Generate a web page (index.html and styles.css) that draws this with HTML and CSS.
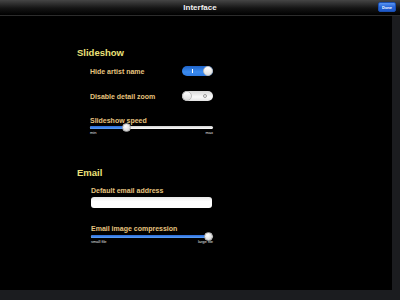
FILE: index.html
```html
<!DOCTYPE html>
<html>
    <head>
        <title>Interface</title>
        <meta charset="UTF-8">
        <link rel="stylesheet" href="styles.css">
    </head>
    <body>
        <div class="tela">
            <header class="barra">
                <span></span>
                <h1>Interface</h1>
                <button class="pronto">Done</button>
            </header>
            <main class="conteudo">
                <!-- Slideshow -->
                <section class="secao">
                    <h2>Slideshow</h2>
                    <div class="itens">
                        <div class="linha">
                            <span class="rotulo">Hide artist name</span>
                            <span class="chave ligada"><span class="marca-i"></span><span class="botao"></span></span>
                        </div>
                        <div class="linha segunda">
                            <span class="rotulo">Disable detail zoom</span>
                            <span class="chave"><span class="botao"></span><span class="marca-o"></span></span>
                        </div>
                        <div class="deslizante">
                            <span class="rotulo">Slideshow speed</span>
                            <div class="trilho">
                                <div class="preenchido" style="width: 29%"></div>
                                <div class="polegar" style="left: 29%"></div>
                            </div>
                            <div class="escala"><span>min</span><span>max</span></div>
                        </div>
                    </div>
                </section>
                <!-- Email -->
                <section class="secao email">
                    <h2>Email</h2>
                    <div class="itens">
                        <span class="rotulo">Default email address</span>
                        <input class="campo" type="text">
                        <div class="deslizante compressao">
                            <span class="rotulo">Email image compression</span>
                            <div class="trilho">
                                <div class="preenchido" style="width: 96%"></div>
                                <div class="polegar" style="left: 96%"></div>
                            </div>
                            <div class="escala"><span>small file</span><span>large file</span></div>
                        </div>
                    </div>
                </section>
            </main>
        </div>
    </body>
</html>
```

FILE: styles.css
```css
* {
    margin: 0;
    padding: 0;
    box-sizing: border-box;
    font-family: "Liberation Sans", Arial, sans-serif;
}
html, body {
    width: 400px;
    height: 300px;
    overflow: hidden;
}
body {
    background-color: #1b1c1f;
}
.tela {
    display: flex;
    flex-direction: column;
}
.barra {
    display: grid;
    grid-template-columns: 1fr auto 1fr;
    align-items: center;
    height: 16px;
    background: linear-gradient(#454545, #141414 55%, #000);
    border-bottom: 1px solid #2c2c2c;
}
.barra h1 {
    font-size: 8px;
    font-weight: bold;
    color: #f2f2f2;
    line-height: 14px;
}
.pronto {
    justify-self: end;
    margin-right: 4px;
    margin-top: -1px;
    width: 18px;
    height: 10px;
    border: 1px solid #1b4fb0;
    border-radius: 2px;
    background: linear-gradient(#5a94f0, #2565d8 50%, #1d58c8);
    color: white;
    font-size: 4px;
    font-weight: bold;
}
.conteudo {
    width: 392px;
    height: 274px;
    background-color: #000;
    padding: 31px 0 0 77px;
}
.secao h2 {
    font-size: 9.5px;
    font-weight: bold;
    line-height: 12px;
    color: #ece27a;
}
.itens {
    padding-left: 13px;
    width: 136px;
    display: flex;
    flex-direction: column;
}
.rotulo {
    display: block;
    font-size: 7px;
    font-weight: bold;
    line-height: 9px;
    color: #e7c47f;
}
.linha {
    display: flex;
    align-items: center;
    justify-content: space-between;
    height: 10px;
    margin-top: 7px;
}
.linha.segunda {
    margin-top: 15px;
}
.chave {
    display: flex;
    align-items: center;
    justify-content: space-between;
    width: 31px;
    height: 10px;
    border-radius: 5px;
    background: linear-gradient(#d8d8d8, #fafafa 60%, #e4e4e4);
    padding-right: 6px;
}
.chave.ligada {
    background: linear-gradient(#1f63c8, #3b8cf0 60%, #2f7ae0);
    padding: 0 0 0 10px;
}
.botao {
    width: 10px;
    height: 10px;
    border-radius: 50%;
    background: linear-gradient(#ffffff, #dedede);
    border: 1px solid #bdbdbd;
}
.marca-i {
    width: 1px;
    height: 4px;
    background-color: #fff;
}
.marca-o {
    width: 4px;
    height: 4px;
    border-radius: 50%;
    border: 1px solid #9a9a9a;
}
.deslizante {
    margin-top: 15px;
    width: 123px;
}
.trilho {
    position: relative;
    height: 3px;
    margin-top: 1px;
    border-radius: 2px;
    background: linear-gradient(#d0d0d0, #ffffff);
}
.preenchido {
    height: 3px;
    border-radius: 2px;
    background: linear-gradient(#2a6ad8, #5aa0f8);
}
.polegar {
    position: absolute;
    top: -3px;
    width: 9px;
    height: 9px;
    margin-left: -4px;
    border-radius: 50%;
    background: radial-gradient(circle at 40% 35%, #ffffff, #c9c9c9);
    border: 1px solid #a8a8a8;
}
.escala {
    display: flex;
    justify-content: space-between;
    margin-top: 1px;
    font-size: 4px;
    line-height: 5px;
    color: #e0e0e0;
}
.secao.email {
    margin-top: 32px;
}
.email h2 {
    margin-bottom: 7px;
}
.email .itens {
    padding-left: 14px;
}
.campo {
    margin-top: 2px;
    width: 121px;
    height: 11px;
    border: none;
    border-radius: 3px;
    background: linear-gradient(#e8e8e8, #ffffff 40%);
}
.deslizante.compressao {
    margin-top: 16px;
    width: 122px;
}
.compressao .trilho {
    margin-top: 2px;
}
```
